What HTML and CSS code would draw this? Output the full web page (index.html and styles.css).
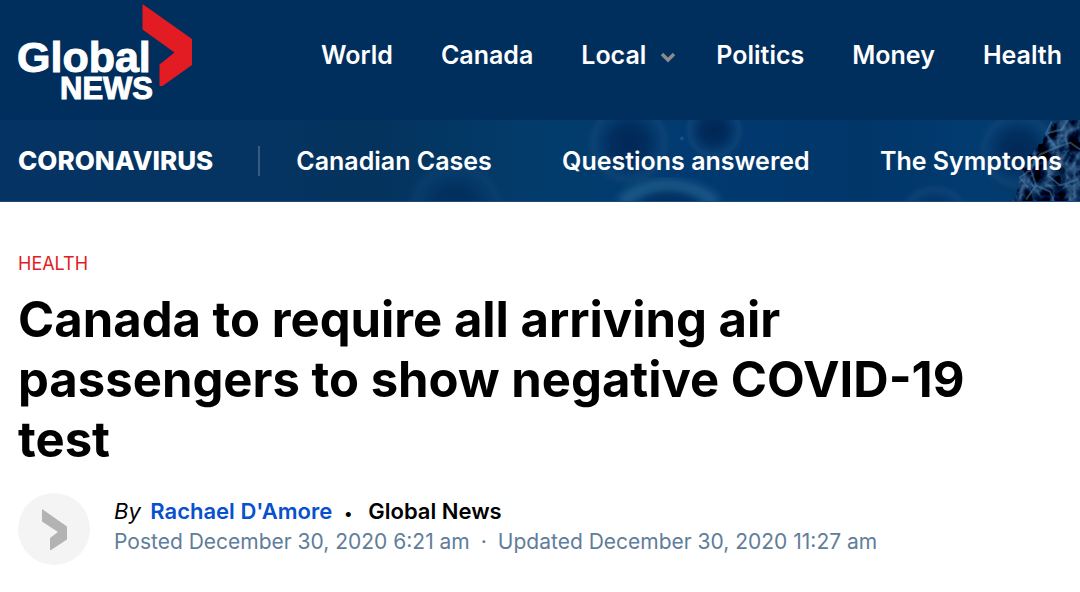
FILE: index.html
```html
<!DOCTYPE html>
<html lang="en">
<head>
<meta charset="utf-8">
<meta name="viewport" content="width=device-width, initial-scale=1">
<title>Canada to require all arriving air passengers to show negative COVID-19 test</title>
<link rel="stylesheet" href="styles.css">
</head>
<body>
<header class="masthead">
  <a class="logo" href="#" aria-label="Global News home">
    <svg width="180" height="116" viewBox="16 0 180 116">
      <path fill="#e31b23" d="M142.500 4L192 39V65L162.500 86H159.500V64.500L174.500 52.500L142.500 29.500Z"/>
      <text class="logo-name" x="17" y="72">Global</text>
      <text class="logo-news" x="153" y="99" text-anchor="end">NEWS</text>
    </svg>
  </a>
  <nav class="main-nav" aria-label="Sections">
    <a href="#">World</a>
    <a href="#">Canada</a>
    <button class="nav-drop" type="button">Local
      <svg width="16" height="12" viewBox="0 0 16 12"><path d="M2 3L8 9L14 3" fill="none" stroke="#8b8b8b" stroke-width="3.500"/></svg>
    </button>
    <a href="#">Politics</a>
    <a href="#">Money</a>
    <a href="#">Health</a>
  </nav>
</header>
<section class="topic">
  <svg class="topic-art" viewBox="0 0 1080 82" preserveAspectRatio="xMaxYMid slice" aria-hidden="true">
    <defs>
      <linearGradient id="base">
        <stop offset="0" stop-color="#053464"/><stop offset=".25" stop-color="#053462"/>
        <stop offset=".34" stop-color="#04335d"/><stop offset=".51" stop-color="#023c6c"/>
        <stop offset=".64" stop-color="#013a70"/><stop offset=".8" stop-color="#013669"/>
        <stop offset=".9" stop-color="#013b70"/><stop offset="1" stop-color="#053966"/>
      </linearGradient>
      <radialGradient id="cell">
        <stop offset="0" stop-color="#01224f"/><stop offset=".4" stop-color="#012a5a"/>
        <stop offset=".7" stop-color="#073d70"/><stop offset=".84" stop-color="#154879" stop-opacity=".6"/>
        <stop offset="1" stop-color="#073d70" stop-opacity="0"/>
      </radialGradient>
      <filter id="soft" x="-20%" y="-50%" width="140%" height="200%"><feGaussianBlur stdDeviation="4"/></filter>
      <filter id="rough" x="-10%" y="-10%" width="120%" height="120%" color-interpolation-filters="sRGB">
        <feTurbulence type="turbulence" baseFrequency=".06 .045" numOctaves="3" seed="8" result="n"/>
        <feColorMatrix in="n" type="matrix" values="-.8 0 0 0 .26  -1 0 0 0 .44  -1.100 0 0 0 .62  0 0 0 0 1" result="c"/>
        <feDisplacementMap in="SourceGraphic" in2="n" scale="12" result="s"/>
        <feComposite in="c" in2="s" operator="in"/>
      </filter>
    </defs>
    <rect width="1080" height="82" fill="url(#base)"/>
    <circle cx="456" cy="90" r="52" fill="url(#cell)" opacity=".5"/>
    <circle cx="629" cy="24" r="44" fill="url(#cell)" opacity=".8"/>
    <circle cx="714" cy="11" r="31" fill="url(#cell)" opacity=".85"/>
    <path d="M622 84C642 60 691 61 716 84" fill="none" stroke="#286591" stroke-width="13" opacity=".7" filter="url(#soft)"/>
    <ellipse cx="670" cy="88" rx="30" ry="15" fill="#032c58" opacity=".7" filter="url(#soft)"/>
    <circle cx="682" cy="19" r="2" fill="#09558d"/>
    <circle cx="1018" cy="31" r="42" fill="url(#cell)" opacity=".75"/>
    <circle cx="935" cy="102" r="40" fill="url(#cell)" opacity=".8"/>
    <path d="M1054 -4L1041 17L1034 32L1020 47L1014 67L1000 88H1090V-4Z" fill="#fff" filter="url(#rough)"/>
    <g fill="none" stroke="#4d82ad" stroke-width="2" opacity=".5">
      <path d="M1052 2L1046 14L1056 28L1040 35L1031 50L1036 66L1026 80M1056 28L1070 23L1080 30M1031 50L1020 58L1028 68M1046 14L1062 10L1068 0M1036 66L1050 72L1054 82M1054 40L1048 56L1060 66L1078 60"/>
    </g>
  </svg>
  <a class="topic-title" href="#">CORONAVIRUS</a>
  <nav class="topic-nav" aria-label="Coronavirus">
    <a href="#">Canadian Cases</a>
    <a href="#">Questions answered</a>
    <a href="#">The Symptoms</a>
  </nav>
</section>
<main class="story">
  <a class="category" href="#">HEALTH</a>
  <h1 class="headline">Canada to require all arriving air passengers to show negative COVID-19 test</h1>
  <div class="byline">
    <svg class="avatar" width="72" height="72" viewBox="0 0 72 72" aria-hidden="true">
      <circle cx="36" cy="36" r="36" fill="#f4f4f4"/>
      <path fill="#b3b3b3" d="M24 16L49 33.500V46.500L33 57H32V45L40 39L24 28.500Z"/>
    </svg>
    <div class="credits">
      <p class="author"><em>By</em> <a href="#">Rachael D'Amore</a><span class="dot">•</span><span>Global News</span></p>
      <p class="dates"><span>Posted December 30, 2020 6:21 am</span><span>·</span><span>Updated December 30, 2020 11:27 am</span></p>
    </div>
  </div>
</main>
</body>
</html>
```
FILE: styles.css
```css
* { box-sizing: border-box; }
body { margin: 0; background: #fff; color: #000; font-family: Inter, "Liberation Sans", sans-serif; }
a { color: inherit; text-decoration: none; }
p, h1 { margin: 0; }

.masthead { display: flex; justify-content: space-between; align-items: flex-start; height: 120px; padding: 0 18px 0 16px; background: #002e5d; color: #fff; }
.logo svg { display: block; }
.logo text { fill: #fff; stroke: #fff; stroke-width: 1px; font-family: "Liberation Sans", Arial, sans-serif; font-weight: 700; }
.logo-name { font-size: 43px; }
.logo-news { font-size: 31px; }
.main-nav { display: flex; gap: 48px; padding-top: 39px; font-size: 25px; font-weight: 600; line-height: 32px; white-space: nowrap; }
.nav-drop { display: flex; align-items: center; gap: 14px; margin: 0 -8px 0 0; padding: 0; border: 0; background: none; color: inherit; font: inherit; }
.nav-drop svg { margin-top: 4px; }

.topic { position: relative; display: flex; align-items: center; height: 82px; padding: 0 18px; overflow: hidden; border-bottom: 1px solid #1d4c7c; background: #053464; color: #fff; }
.topic-art { position: absolute; inset: 0; width: 100%; height: 100%; }
.topic-title, .topic-nav { position: relative; white-space: nowrap; line-height: 30px; }
.topic-title { padding-right: 45px; border-right: 2px solid #345b84; font-size: 26px; font-weight: 800; }
.topic-nav { display: flex; flex: 1; justify-content: space-between; padding-left: 36px; font-size: 25px; font-weight: 600; }

.story { padding: 52px 18px 24px; }
.category { display: block; color: #e31b23; font-size: 18px; line-height: 20px; }
.headline { max-width: 980px; margin-top: 16px; font-size: 49px; font-weight: 700; line-height: 60px; }
.byline { display: flex; gap: 24px; margin-top: 23px; }
.avatar { flex: none; }
.credits { padding-top: 2px; }
.author { font-size: 22px; font-weight: 600; line-height: 32px; }
.author em { margin-right: 4px; font-weight: 400; }
.author a { color: #0750ce; }
.dot { margin: 0 16px 0 12px; font-size: 16px; line-height: 16px; }
.dates { display: flex; gap: 11px; color: #607d9a; font-size: 21px; line-height: 30px; }
```
